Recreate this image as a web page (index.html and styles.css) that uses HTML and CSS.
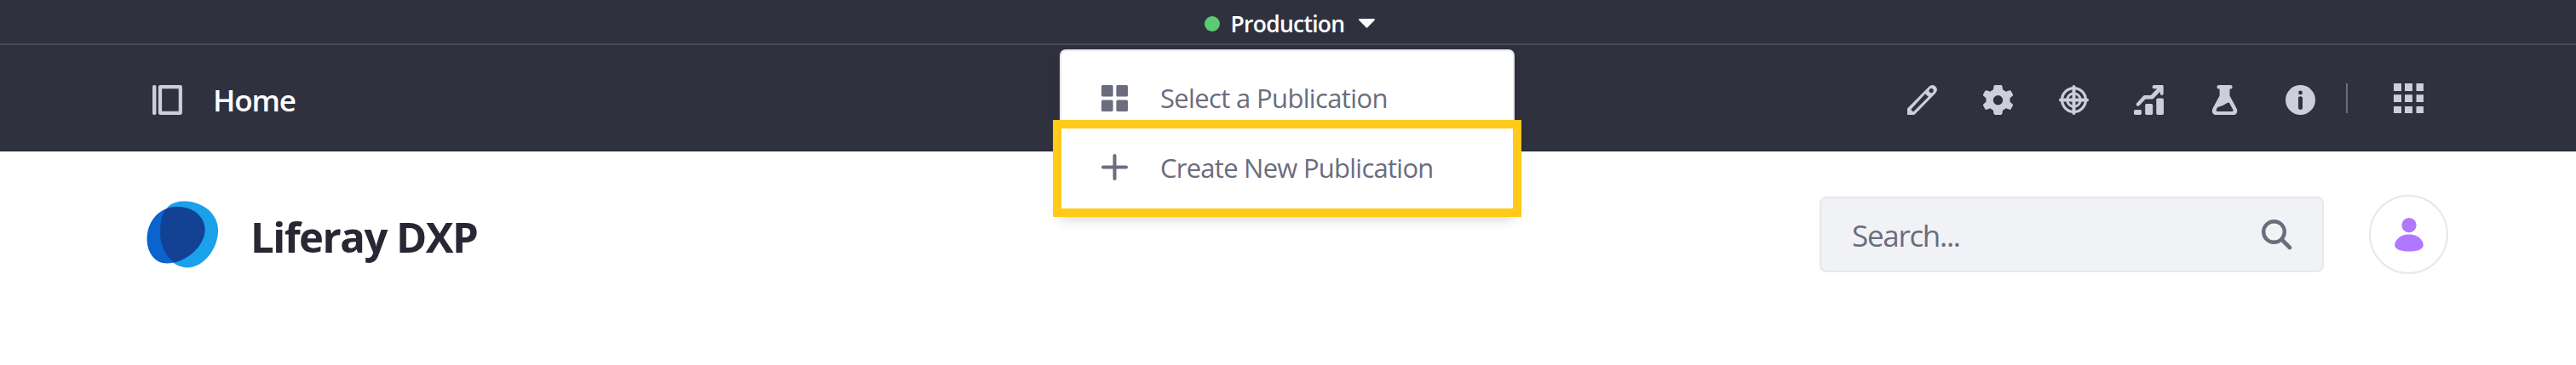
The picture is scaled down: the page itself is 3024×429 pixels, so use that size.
FILE: index.html
```html
<!DOCTYPE html>
<html lang="en">
<head>
<meta charset="utf-8">
<title>Home - Liferay DXP</title>
<link rel="stylesheet" href="styles.css">
</head>
<body>
<div class="publications-bar">
  <button class="publication-toggle">
    <span class="status-dot"></span>
    <span class="publication-name">Production</span>
    <svg class="caret" viewBox="0 0 19 11"><path d="M1.2 0h16.6c1.100 0 1.500 1 .8 1.800l-8 8.300c-.7.700-1.500.700-2.200 0l-8-8.300C-.3 1 .1 0 1.200 0z"/></svg>
  </button>
  <div class="dropdown">
    <div class="dropdown-item">
      <svg viewBox="0 0 31 31"><rect width="13.600" height="13.600" rx="1.500"/><rect x="17.400" width="13.600" height="13.600" rx="1.500"/><rect y="17.400" width="13.600" height="13.600" rx="1.500"/><rect x="17.400" y="17.400" width="13.600" height="13.600" rx="1.500"/></svg>
      <span class="select-label">Select a Publication</span>
    </div>
    <div class="dropdown-item highlighted">
      <svg viewBox="0 0 31 31"><path d="M15.500 2v27M2 15.500h27" fill="none" stroke="currentColor" stroke-width="4" stroke-linecap="round"/></svg>
      <span class="create-label">Create New Publication</span>
    </div>
  </div>
</div>

<header class="control-menu">
  <svg class="icon" viewBox="0 0 35 35"><rect width="4.400" height="35" rx="1.800"/><path d="M9 2.200h23.800v30.600H9z" fill="none" stroke="currentColor" stroke-width="4.200" stroke-linejoin="round"/></svg>
  <span class="page-title">Home</span>
  <nav class="tools">
    <svg class="icon" viewBox="0 0 35 35"><path fill-rule="evenodd" d="M0 27.500 25 2.300c3-3 6.300-2.800 8.200-.5 2.300 2 2.400 5.300-.5 8.200L9 34.200c-.5.500-1 .8-1.700.8H1.200C.4 35 0 34.600 0 33.800zM4.200 28.800 7 31.600 24.800 13.800 21 10.200zM26.200 4.900a2.600 2.600 0 1 0 4.400 2.700A2.600 2.600 0 0 0 26.200 4.900z"/></svg>
    <svg class="icon" viewBox="0 0 35 35"><path fill-rule="evenodd" d="M14.300 0h6.400c1 0 1.500.5 1.700 1.400l.8 4.200c1.300.5 2.500 1.200 3.600 2.100l4-1.400c.9-.3 1.600 0 2 .8l2 3.600c.5.800.3 1.500-.4 2.100l-3 2.700c.2 1.300.2 2.700 0 4l3 2.700c.7.600.9 1.300.4 2.100l-2 3.600c-.4.800-1.100 1.100-2 .8l-4-1.400c-1.100.9-2.300 1.600-3.600 2.100l-.8 4.200c-.2.900-.7 1.400-1.700 1.400h-6.400c-1 0-1.500-.5-1.700-1.400l-.8-4.200c-1.300-.5-2.500-1.200-3.600-2.100l-4 1.400c-.9.300-1.600 0-2-.8l-2-3.600c-.5-.8-.3-1.500.4-2.100l3-2.700c-.2-1.300-.2-2.700 0-4l-3-2.700c-.7-.6-.9-1.300-.4-2.100l2-3.600c.4-.8 1.100-1.100 2-.8l4 1.400c1.100-.9 2.300-1.600 3.600-2.100l.8-4.200C12.800.5 13.300 0 14.300 0zM17.500 12a5.700 5.700 0 1 0 0 11.400 5.700 5.700 0 0 0 0-11.400z"/></svg>
    <svg class="icon" viewBox="0 0 35 35"><g fill="none" stroke="currentColor" stroke-linecap="round"><circle cx="17.500" cy="17.500" r="13.900" stroke-width="3.200"/><circle cx="17.500" cy="17.500" r="7.800" stroke-width="3"/><path d="M17.500 2v31M2 17.500h31" stroke-width="4"/></g></svg>
    <svg class="icon" viewBox="0 0 35 35"><path d="M23.500 0h9.700c1 0 1.500.5 1.500 1.500V10c0 2.600-3.900 2.600-3.900 0V7.700l-7.800 8c-.7.700-1.300.9-2.200.9h-7.300l-6.800 7.200c-2.300 2.300-5.400-.3-3.200-2.800l7.300-8c.8-.8 1.400-1.100 2.400-1.100h6.600L27.200 4.300h-3.700c-2.400 0-2.400-4.300 0-4.300z"/><rect y="29" width="9" height="6" rx="1.800"/><rect x="13.200" y="22" width="9" height="13" rx="1.800"/><rect x="26.300" y="15.500" width="8.700" height="19.500" rx="1.800"/></svg>
    <svg class="icon" viewBox="0 0 35 35"><path fill-rule="evenodd" d="M10.500 0h14.200c2.600 0 2.600 4.400 0 4.400h-1.200v8.100l7.400 13.700C34 31.300 31.500 35 27.700 35H7.600C3.600 35 1.300 31.300 4.100 26.200l7.500-13.700V4.400h-1.100c-2.600 0-2.600-4.400 0-4.400zM22.800 20.500c-3.800.3-6 3.500-9.600 4.200-2.600.5-4.700 1.100-5.400 4.300-.3 1.300.2 2 1.400 2h17c1.200 0 1.700-.8 1.200-2z"/></svg>
    <svg class="icon" viewBox="0 0 35 35"><path fill-rule="evenodd" d="M17.500 0a17.500 17.500 0 1 1 0 35 17.500 17.500 0 0 1 0-35zM17.500 6.500a2.400 2.400 0 1 0 0 4.800 2.400 2.400 0 0 0 0-4.800zM17.500 13.200c-1.500 0-2.500.9-2.500 2.300v11c0 3.200 5 3.200 5 0v-11c0-1.400-1-2.300-2.500-2.300z"/></svg>
    <span class="divider"></span>
    <svg class="icon apps" viewBox="0 0 35 35"><path d="M0 0h9v9H0zM13 0h9v9h-9zM26.500 0H35v9h-8.500zM0 13.300h9v8.700H0zM13 13.300h9v8.700h-9zM26.500 13.300H35V22h-8.500zM0 27h9v8H0zM13 27h9v8h-9zM26.500 27H35v8h-8.500z"/></svg>
  </nav>
</header>

<main class="site-header">
  <svg class="logo" viewBox="0 0 84 79">
    <path fill="#1ba0ea" d="M44 .5C65 .5 84 14 84 35 84 56 67 78.500 48 78.500 29 78.500 16 59 16 38 16 17 22 .5 44 .5z"/>
    <path fill="#0b63ce" d="M36 7C54 7 68.500 18 68.500 34 68.500 54 45 73.500 24 73.500 9 73.500 .5 60 .5 45 .5 23 16 7 36 7z"/>
    <path fill="#134194" d="M22 10.200C26 8 31 7 36 7 54 7 68.500 18 68.500 34 68.500 51 51 68 32.500 72.600 22 65 16 52 16 38 16 27 17.500 17.500 22 10.200z"/>
  </svg>
  <h1 class="site-name">Liferay DXP</h1>
  <div class="search">
    <span class="search-placeholder">Search...</span>
    <svg class="icon" viewBox="0 0 35 35"><g fill="none" stroke="currentColor"><circle cx="14.500" cy="14.500" r="12.300" stroke-width="4.400"/><path d="M23.500 23.500 33 33" stroke-width="4.600" stroke-linecap="round"/></g></svg>
  </div>
  <div class="avatar"><svg viewBox="0 0 34 40"><circle cx="17" cy="8.700" r="8.600"/><path d="M17 19.500c10 0 16.800 6.500 16.800 12.500 0 5-7 7.500-16.800 7.500S.2 37 .2 32C.2 26 7 19.500 17 19.500z"/></svg></div>
</main>
</body>
</html>
```

FILE: styles.css
```css
* { box-sizing: border-box; }
body {
  margin: 0;
  height: 429px;
  overflow: hidden;
  background: #fff;
  font-family: "Segoe UI", "Open Sans", "Noto Sans", sans-serif;
}
svg { display: block; fill: currentColor; flex: none; overflow: visible; }
span, h1 { white-space: nowrap; }

.publications-bar {
  position: relative;
  display: flex;
  justify-content: center;
  height: 53px;
  background: #30313f;
  border-bottom: 2px solid #484a5e;
}
.publication-toggle {
  display: flex;
  align-items: center;
  height: 51px;
  padding: 4px 0 0 3px;
  border: 0;
  background: none;
  color: #fff;
  font: inherit;
}
.status-dot { width: 18px; height: 18px; margin-right: 13px; border-radius: 50%; background: #5aca75; }
.publication-name { width: 150px; font-size: 26.5px; font-weight: 600; line-height: 36px; text-align: left; letter-spacing: -.75px; }
.caret { width: 19px; height: 11px; }

.dropdown {
  position: absolute;
  z-index: 2;
  top: 58px;
  left: 1244px;
  width: 534px;
  height: 196px;
  padding-top: 27px;
  border: 2px solid #e7e7ed;
  border-radius: 7px;
  background: #fff;
  box-shadow: 0 4px 14px rgba(39, 40, 51, .2);
  color: #6b6c7e;
}
.dropdown-item { display: flex; align-items: center; gap: 38px; height: 56px; padding-left: 47px; font-size: 31px; line-height: 56px; }
.dropdown-item svg { width: 31px; height: 31px; }
.dropdown-item.highlighted { height: 114px; margin: -2px -10px 0; padding: 0 0 3px 47px; border: 10px solid #ffca18; }
.select-label { letter-spacing: -.65px; }
.create-label { letter-spacing: -.75px; }

.control-menu {
  display: flex;
  align-items: center;
  height: 125px;
  padding: 4px 179px 0;
  background: #30313f;
  border-bottom: 1px solid #272833;
  color: #cdced9;
}
.icon { width: 35px; height: 35px; }
.page-title { margin-left: 36px; color: #fff; font-size: 35px; font-weight: 600; letter-spacing: -1.100px; }
.tools { display: flex; align-items: center; gap: 53.900px; margin-left: auto; }
.divider { width: 2px; height: 35px; margin: -4px 0 0 -18px; background: #6b6c7e; }
.apps { margin-top: -4px; }

.site-header { display: flex; align-items: center; height: 195px; padding: 0 150px 0 172px; }
.logo { width: 84px; height: 79px; }
.site-name { margin: 5px 0 0 38px; color: #272833; font-size: 49px; font-weight: 700; line-height: 66px; letter-spacing: -1.500px; }
.search {
  display: flex;
  align-items: center;
  justify-content: space-between;
  width: 592px;
  height: 89px;
  margin-left: auto;
  padding: 0 36px;
  border: 2px solid #e7e7ed;
  border-radius: 8px;
  background: #f1f2f5;
  color: #6b6c7e;
  font-size: 35px;
}
.search-placeholder { padding-top: 2px; letter-spacing: -1.300px; }
.avatar { display: grid; place-items: center; width: 93px; height: 93px; margin-left: 53px; border: 2px solid #e7e7ed; border-radius: 50%; color: #af78ff; }
.avatar svg { width: 34px; height: 40px; }
```
